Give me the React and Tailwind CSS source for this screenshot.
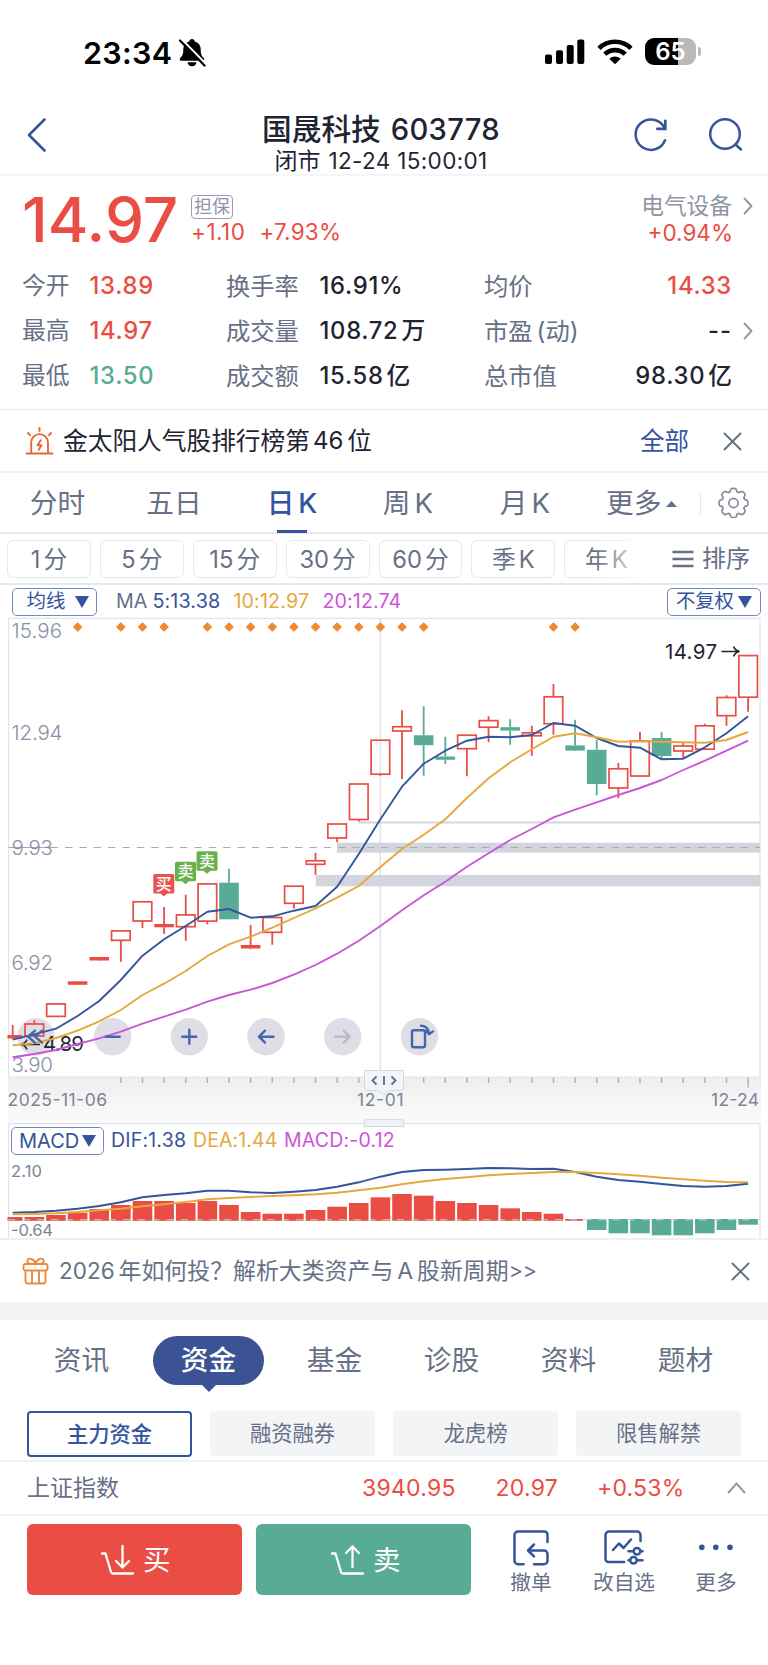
import React from "react";

const RED = "#ea4d44";
const GREEN = "#58ab94";
const BLUE = "#34549c";
const AMBER = "#e6a73c";
const VIOLET = "#cb55d8";

const cx = (i) => 12.7 + i * 21.63;

// [up, body top, body bottom, high, low]
const CANDLES = [
  [1, 1035, 1038.5, 1025, 1039.5],
  [1, 1024, 1036, 1020, 1036],
  [1, 1003.9, 1016.4, 1004, 1016],
  [1, 981.3, 984.8, 983, 983],
  [1, 957, 960.5, 958, 958],
  [1, 930.9, 940.3, 931, 961.7],
  [1, 901.8, 921, 902, 928],
  [1, 924, 927.3, 907, 934],
  [1, 914.9, 926.7, 894.7, 940.7],
  [1, 883.9, 921.1, 884, 924.6],
  [0, 882.7, 919.3, 868.7, 919],
  [1, 945, 948.5, 925, 949.3],
  [1, 917.5, 932.3, 918, 944.7],
  [1, 886.2, 903.3, 887, 908.5],
  [1, 860.8, 864.3, 852.7, 874.7],
  [1, 824, 838, 824, 842.3],
  [1, 784, 819.5, 784, 821.5],
  [1, 740.2, 774.2, 741, 775.8],
  [1, 726.7, 731, 710.3, 779],
  [0, 735.3, 745.2, 706.3, 775.7],
  [0, 756.5, 759.8, 736.7, 764],
  [1, 735.2, 748.7, 734.5, 776.3],
  [1, 720.6, 727.2, 716.3, 742.3],
  [0, 727.2, 730.6, 719.3, 744.7],
  [1, 732.8, 735.8, 725.7, 755.7],
  [1, 696.8, 723.8, 684, 734.7],
  [0, 745.4, 750.6, 719.7, 750],
  [0, 749.8, 784, 740, 795.3],
  [1, 768.8, 788, 763, 798.3],
  [1, 741, 776, 731.7, 777],
  [0, 738, 756, 731.7, 758.7],
  [1, 746, 751, 743, 759],
  [1, 725.8, 749.2, 723.7, 749],
  [1, 697.5, 715.7, 695.3, 726],
  [1, 655.6, 697.2, 656, 711.7],
];

const MA5 = [1039.7, 1034.3, 1028.7, 1016, 1001, 980, 955.7, 939.3, 926, 911.7, 909, 917.7, 916.3, 910.7, 906, 886.7, 854, 819.3, 786.7, 763.7, 750.7, 740.7, 736.7, 737.3, 735, 723, 725.7, 738, 746, 747.7, 759.3, 758.7, 747.3, 733.3, 716.3];
const MA10 = [1045.3, 1043.3, 1038, 1030.7, 1021.3, 1010, 995, 983.7, 971, 956, 944.3, 936.7, 927.7, 918, 908.3, 897.7, 886, 867, 849, 834.7, 819.3, 798, 778.3, 762.3, 749.3, 736.7, 733.3, 737.3, 741.7, 741.3, 741.7, 742.3, 742.7, 740, 732];
const MA20 = [1057.3, 1054, 1050, 1044, 1038.3, 1031.7, 1023.7, 1016.7, 1009.7, 1001.7, 995, 989.7, 983, 974.7, 965, 953.7, 940.7, 926, 910.3, 895.3, 881.7, 866.7, 853.3, 840, 829, 817.3, 809.7, 802.3, 795, 788, 780, 770, 760.7, 750.7, 740.7];

const HIST = [1217, 1217, 1215, 1212.7, 1209, 1205, 1201, 1201, 1203, 1201, 1205, 1212, 1213.7, 1213.7, 1210, 1206.7, 1203, 1197.3, 1194, 1195.7, 1201, 1203, 1205, 1208.3, 1212, 1213.7, 1219, 1230, 1233.3, 1233.3, 1235.3, 1235.3, 1233.3, 1230, 1224.7];
const DIF = [1212.7, 1212, 1210.7, 1208.7, 1206, 1202.3, 1197.3, 1195, 1193.3, 1190.7, 1190.7, 1192.3, 1193, 1191.7, 1190, 1186.7, 1182.3, 1176.7, 1172, 1170, 1169.7, 1169, 1168, 1168.3, 1169, 1168.7, 1172, 1176.7, 1180, 1181.7, 1184, 1186, 1186.7, 1186, 1183.7];
const DEA = [1214.3, 1214, 1213.3, 1212, 1210.3, 1208.7, 1206.3, 1204.3, 1202, 1199.3, 1198, 1197, 1196, 1195.3, 1194.3, 1192.7, 1190.3, 1187.7, 1184.3, 1181.3, 1179, 1177.3, 1175.3, 1174, 1173, 1172, 1172, 1173, 1174.3, 1175.7, 1177.7, 1179.3, 1180.7, 1182, 1182.3];

const MARKS = [3, 5, 6, 7, 9, 10, 11, 12, 13, 14, 15, 16, 17, 18, 19, 25, 26];

const line = (ys) => ys.map((y, i) => `${cx(i).toFixed(1)},${y}`).join(" ");

function StatusBar() {
  return (
    <div className="flex h-[104px] shrink-0 pl-[83px] pr-[67px]">
      <div className="mt-[37px] flex h-8 items-center text-[30.5px] font-semibold leading-none text-black">
        <span className="w-[95px] tracking-[0.3px]">23:34</span>
        <svg width="28" height="30" viewBox="0 0 28 30" fill="#000">
          <path d="M14 1c1.600 0 2.600 1 2.700 2.400 4 1 6 4.200 6 8 0 4.800.9 6.400 3 8.600 1 1 .6 2.700-.9 2.700H3.200c-1.500 0-1.900-1.700-.9-2.700 2.100-2.200 3-3.800 3-8.600 0-3.800 2-7 6-8C11.400 2 12.400 1 14 1z" />
          <path d="M9.500 24.300h9c-.3 2.500-2.200 4-4.500 4s-4.200-1.500-4.500-4z" />
          <path d="M4.200 1.700 29 27" stroke="#fff" strokeWidth="2" />
          <path d="M2 2.500 26.500 27.500" stroke="#000" strokeWidth="2.200" strokeLinecap="round" />
        </svg>
      </div>
      <div className="ml-auto mt-[38px] flex h-[27px] items-center">
        <svg className="mt-[1px]" width="40" height="26" viewBox="0 0 40 26" fill="#000">
          <rect x="0" y="15.500" width="7" height="9.500" rx="2" />
          <rect x="11" y="11.300" width="7" height="13.700" rx="2" />
          <rect x="21.700" y="6" width="7" height="19" rx="2" />
          <rect x="32.300" y="0.500" width="7" height="24.500" rx="2" />
        </svg>
        <svg className="ml-3 mt-[1px]" width="36" height="26" viewBox="0 0 36 26" fill="none" stroke="#000" strokeWidth="4.600">
          <path d="M2 9.300a23 23 0 0 1 32 0" />
          <path d="M7.800 15.200a14.800 14.800 0 0 1 20.400 0" />
          <path d="M12.300 19.700a8.200 8.200 0 0 1 11.400 0L18 25.300z" fill="#000" stroke="none" />
        </svg>
        <div className="ml-3 flex h-[27px] w-[51px] items-center justify-center rounded-[9px] bg-[linear-gradient(90deg,#000_65%,#b9b9b9_65%)] text-[24px] font-semibold leading-none text-white">
          65
        </div>
        <div className="ml-[2px] h-[9px] w-[3px] rounded-r-full bg-[#b9b9b9]" />
      </div>
    </div>
  );
}

function Header() {
  return (
    <div className="flex h-[72px] shrink-0 border-b-2 border-[#f5f6f7] pl-[27px] pr-[25px]">
      <svg className="mt-[13px]" width="20" height="36" viewBox="0 0 20 36" fill="none" stroke={BLUE} strokeWidth="2.600" strokeLinecap="round" strokeLinejoin="round">
        <path d="M17.500 2.500 2 18l15.500 15.500" />
      </svg>
      <div className="ml-[107px] flex w-[454px] flex-col items-center text-[#1f2433]">
        <div className="mt-[9px] flex h-[34px] items-center whitespace-nowrap text-[29.700px] font-medium leading-none">
          国晟科技<span className="ml-[10px] text-[29.200px] tracking-[0.3px]">603778</span>
        </div>
        <div className="mt-[1px] flex h-[26px] items-center whitespace-nowrap text-[23px] leading-none">
          闭市<span className="ml-[8px] text-[22.500px] tracking-[0.350px]">12-24 15:00:01</span>
        </div>
      </div>
      <svg className="ml-auto mt-[13px]" width="36" height="36" viewBox="0 0 36 36" fill="none" stroke={BLUE} strokeWidth="2.500" strokeLinecap="round">
        <path d="M32 23.200A15.200 15.200 0 1 1 31.500 11" />
        <path d="M32.300 3.800v8h-8" strokeWidth="2.700" />
      </svg>
      <svg className="ml-[38px] mt-[13px]" width="36" height="36" viewBox="0 0 36 36" fill="none" stroke={BLUE} strokeWidth="2.500" strokeLinecap="round">
        <circle cx="18" cy="17" r="14.800" />
        <path d="m28.500 27.500 5.500 5" />
      </svg>
    </div>
  );
}

function Chevron({ className, color = "#9198a8" }) {
  return (
    <svg className={className} width="10" height="18" viewBox="0 0 10 18" fill="none" stroke={color} strokeWidth="1.900" strokeLinecap="round" strokeLinejoin="round">
      <path d="m1.500 1.500 7 7.500-7 7.500" />
    </svg>
  );
}

function Close({ className }) {
  return (
    <svg className={className} width="19" height="19" viewBox="0 0 19 19" fill="none" stroke="#667085" strokeWidth="1.900" strokeLinecap="round">
      <path d="m1.500 1.500 16 16M17.500 1.500l-16 16" />
    </svg>
  );
}

const STATS = [
  ["今开", "13.89", "text-[#ea4d44]", "换手率", "16.91%", "", "均价", "14.33", "", "text-[#ea4d44]"],
  ["最高", "14.97", "text-[#ea4d44]", "成交量", "108.72", "万", "市盈", "--", "", "text-[#1f2433]"],
  ["最低", "13.50", "text-[#58ab94]", "成交额", "15.58", "亿", "总市值", "98.30", "亿", "text-[#1f2433]"],
];

function Quote() {
  return (
    <div className="h-[234px] shrink-0 border-b border-[#e6e8eb]">
      <div className="flex h-[88px]">
        <div className="ml-[22px] flex w-[169px] items-center text-[62px] font-medium leading-none tracking-[0.1px] text-[#ea4d44]">14.97</div>
        <div className="pt-[19px]">
          <div className="flex h-[24px] w-[42px] items-center justify-center rounded-[4px] border border-[#9a9db5] text-[18px] leading-none text-[#8f92ad]">担保</div>
          <div className="flex h-[26px] items-center gap-[14px] text-[22.5px] leading-none text-[#ea4d44]">
            <span className="tracking-[0.5px]">+1.10</span>
            <span className="tracking-[0.2px]">+7.93%</span>
          </div>
        </div>
        <div className="ml-auto flex pt-[17px]">
          <div className="flex flex-col items-end">
            <div className="flex h-[27px] items-center text-[22.700px] leading-none text-[#9095a6]">电气设备</div>
            <div className="-mr-[1px] flex h-[26px] items-center text-[22.500px] leading-none text-[#ea4d44]">+0.94%</div>
          </div>
          <Chevron className="ml-[11px] mr-[15px] mt-[4px]" />
        </div>
      </div>
      {STATS.map((r) => (
        <div key={r[0]} className="flex h-[44.7px] items-center text-[23.800px] leading-none text-[#677086]">
          <span className="ml-[22px] w-[67.500px]">{r[0]}</span>
          <span className={`w-[136.500px] font-medium tracking-[0.700px] ${r[2]}`}>{r[1]}</span>
          <span className="w-[93.500px] text-[24.300px]">{r[3]}</span>
          <span className="flex w-[164.500px] items-center font-medium text-[#1f2433]">
            <span className="tracking-[0.700px]">{r[4]}</span>
            {r[5] && <span className="ml-[3px]">{r[5]}</span>}
          </span>
          <span className="flex items-center text-[24.300px]">
            {r[6]}
            {r[6] === "市盈" && <span className="ml-[4px]">(动)</span>}
          </span>
          <span className={`ml-auto mr-[36px] flex items-center font-medium ${r[9]}`}>
            <span className={r[7] === "--" ? "tracking-[1px]" : "tracking-[0.700px]"}>{r[7]}</span>
            {r[8] && <span className="ml-[3px]">{r[8]}</span>}
          </span>
          {r[7] === "--" && <Chevron className="-ml-[25px] mr-[15px]" />}
        </div>
      ))}
    </div>
  );
}

function RankBanner() {
  return (
    <div className="flex h-[63px] shrink-0 items-center border-b-2 border-[#f0f2f4] pl-[25px] pr-[26px] pt-[1px] text-[24.700px] leading-none text-[#1f2433]">
      <svg width="29" height="28" viewBox="0 0 29 28" fill="none" stroke="#e8653a" strokeWidth="1.900" strokeLinecap="round" strokeLinejoin="round">
        <path d="M1.500 26.500h26M6.200 26V15.500a8.400 8.400 0 0 1 16.800 0V26" />
        <path d="M14.500 1v3M3 6l2 2.200M26 6l-2 2.200" />
        <path d="m15.800 13.200-3.300 5h4l-2.800 4.600" />
      </svg>
      <span className="ml-[9px]">金太阳人气股排行榜第</span>
      <span className="ml-[3px] mr-[4px] text-[24px]">46</span>
      <span>位</span>
      <span className="ml-auto text-[24.500px] text-[#34549c]">全部</span>
      <Close className="ml-[34px]" />
    </div>
  );
}

const PERIODS = [
  ["分时", "", "w-[115px]"],
  ["五日", "", "w-[118px]"],
  ["日", "K", "w-[118px]"],
  ["周", "K", "w-[114px]"],
  ["月", "K", "w-[120px]"],
];

function PeriodTabs() {
  return (
    <div className="flex h-[61px] shrink-0 border-b-2 border-[#e6e8ec] text-[27.700px] leading-none text-[#677086]">
      {PERIODS.map(([a, b, w]) => (
        <div key={a} className={`relative flex items-center justify-center pt-[2px] ${w} ${a === "日" ? "font-medium text-[#34549c]" : ""}`}>
          {a}
          {b && <span className="ml-[4px]">{b}</span>}
          {a === "日" && <span className="absolute -bottom-[1px] h-[3px] w-[30px] bg-[#34549c]" />}
        </div>
      ))}
      <div className="ml-[21px] flex w-[94px] items-center pt-[2px]">
        更多
        <svg className="ml-[5px]" width="11" height="8" viewBox="0 0 11 8" fill="#677086"><path d="M5.500 1 11 7H0z" /></svg>
      </div>
      <div className="mt-[20px] h-[22px] w-px bg-[#e3e6ea]" />
      <svg className="ml-[17px] mt-[14px]" width="31" height="31" viewBox="0 0 31 31" fill="none" stroke="#858c9c" strokeWidth="1.700" strokeLinejoin="round">
        <path d="M12.900 2.200c.5-1 4.700-1 5.200 0l1 2.700 1.700.7 2.600-1.200c1.100-.4 4.100 2.600 3.700 3.700l-1.200 2.600.7 1.700 2.700 1c1 .5 1 4.700 0 5.200l-2.700 1-.7 1.700 1.200 2.600c.4 1.100-2.600 4.100-3.700 3.700l-2.600-1.200-1.700.7-1 2.700c-.5 1-4.700 1-5.200 0l-1-2.700-1.700-.7-2.600 1.200c-1.100.4-4.100-2.600-3.700-3.700l1.200-2.600-.7-1.700-2.700-1c-1-.5-1-4.700 0-5.200l2.700-1 .7-1.700-1.200-2.600c-.4-1.100 2.600-4.100 3.700-3.700l2.600 1.200 1.700-.7z" />
        <circle cx="15.500" cy="16" r="4.600" />
      </svg>
    </div>
  );
}

const MINUTES = [["1", "分"], ["5", "分"], ["15", "分"], ["30", "分"], ["60", "分"], ["季", "K"], ["年", "K"]];

function MinuteTabs() {
  return (
    <div className="flex h-[51px] shrink-0 items-center border-b-2 border-[#e6e8ec] text-[23.700px] leading-none text-[#677086]">
      <div className="relative flex gap-[9px] pl-[7px]">
        {MINUTES.map(([a, b]) => (
          <div key={a} className="flex h-[38px] w-[83.900px] items-center justify-center gap-[3px] rounded-[6px] border-[1.500px] border-[#e4e7eb] pt-[2px]">
            <span>{a}</span>
            <span>{b}</span>
          </div>
        ))}
        <div className="absolute -right-[2px] top-0 h-[38px] w-[56px] bg-linear-to-r from-white/0 to-white" />
      </div>
      <div className="ml-auto mr-[18px] flex items-center pt-[1px]">
        <svg width="22" height="18" viewBox="0 0 22 18" stroke="#677086" strokeWidth="2.600"><path d="M0.500 2h21M0.500 9h21M0.500 16h21" /></svg>
        <span className="ml-[8px] text-[24px]">排序</span>
      </div>
    </div>
  );
}

function Triangle({ className }) {
  return (
    <svg className={className} width="14" height="12" viewBox="0 0 14 12" fill={BLUE}><path d="M0 0h14L7 12z" /></svg>
  );
}

function MaBar() {
  return (
    <div className="flex h-[32px] shrink-0 items-center pl-[12px] pr-[7px] pt-[1px] text-[19.700px] leading-none">
      <div className="flex h-[28px] w-[85px] items-center rounded-[5px] border-[1.500px] border-[#6f8bc4] pl-[13.500px] text-[19.500px] text-[#34549c]">
        均线
        <Triangle className="ml-[9px]" />
      </div>
      <span className="ml-[19px] text-[#677086]">MA</span>
      <span className="ml-[5px] w-[81px] tracking-[0.150px] text-[#34549c]">5:13.38</span>
      <span className="w-[89px] tracking-[0.150px] text-[#e6a73c]">10:12.97</span>
      <span className="tracking-[0.100px] text-[#cb55d8]">20:12.74</span>
      <div className="ml-auto flex h-[28px] w-[94px] items-center rounded-[5px] border-[1.500px] border-[#6f8bc4] pl-[8px] text-[19.300px] text-[#34549c]">
        不复权
        <Triangle className="ml-[4px]" />
      </div>
    </div>
  );
}

function Badge({ x, y, color, children }) {
  return (
    <g transform={`translate(${x} ${y})`}>
      <path d="M-9 0H9a1.500 1.500 0 0 1 1.500 1.500v16.500A1.500 1.500 0 0 1 9 19.500H3.500L0 22.500l-3.500-3H-9a1.500 1.500 0 0 1-1.500-1.500V1.500A1.500 1.500 0 0 1-9 0z" fill={color} />
      <text x="0" y="15.700" textAnchor="middle" fontSize="16" fontWeight="500" fill="#fff">{children}</text>
    </g>
  );
}

const DISCS = [36, 112.7, 189.3, 266, 342.7, 419.5];

function Glyph({ i, children, muted }) {
  return (
    <g transform={`translate(${DISCS[i]} 1036.700)`} fill="none" stroke={muted ? "#b9bccb" : "#4466ab"} strokeWidth="2.400" strokeLinecap="round" strokeLinejoin="round">
      {children}
    </g>
  );
}

function KLineChart() {
  return (
    <svg className="block shrink-0" width="768" height="506" viewBox="0 617 768 506">
      <defs>
        <linearGradient id="axis" x1="0" y1="0" x2="0" y2="1">
          <stop offset="0" stopColor="#eeeeef" />
          <stop offset="1" stopColor="#fbfbfb" />
        </linearGradient>
      </defs>
      <rect x="8" y="1077" width="753" height="46" fill="url(#axis)" />
      <path d="M8.500 1077V618.300H760V1077z" fill="none" stroke="#e3e4e8" strokeWidth="1.200" />
      <path d="M380.300 618v459" stroke="#dcdee4" strokeWidth="1.300" />
      <g fill="#d2d6dc">
        <rect x="358.500" y="821.500" width="402" height="2" />
        <rect x="337" y="842.700" width="423.500" height="10" />
        <rect x="315.700" y="875" width="444.800" height="11.300" />
      </g>
      <path d="M8.500 847.500H58" stroke="#a6abb6" strokeWidth="1.200" />
      <path d="M65 847.500H760" stroke="#a6abb6" strokeWidth="1.200" strokeDasharray="7.300 7.080" />
      {MARKS.map((i) => (
        <path key={i} d={`M${cx(i) - 3.8} 627l3.800-3.800 3.800 3.800-3.800 3.800z`} fill="#ee8a30" stroke="#ee8a30" strokeWidth="1.600" strokeLinejoin="round" />
      ))}
      <g fontSize="20.500" fontWeight="300" fill="#8b8fa6">
        <text x="11.500" y="638" textLength="50.500">15.96</text>
        <text x="11.500" y="740" textLength="51">12.94</text>
        <text x="11.500" y="855" textLength="41.500">9.93</text>
        <text x="11.500" y="969.500" textLength="41.500">6.92</text>
        <text x="11.500" y="1071.500" textLength="41.500">3.90</text>
      </g>
      {DISCS.map((x) => (
        <circle key={x} cx={x} cy="1036.700" r="18.700" fill="#dfdee6" />
      ))}
      {CANDLES.map(([up, top, bottom, high, low], i) => {
        const x = cx(i);
        const c = up ? RED : GREEN;
        const solid = !up || (bottom - top < 3.6 && i < 12);
        const left = i === 0 ? 7.5 : x - 9.8;
        const right = i === 0 ? x + 9.3 : x + 9.8;
        return (
          <g key={i} stroke={c} strokeWidth="1.700">
            <path d={`M${x} ${high}V${top}M${x} ${bottom}V${low}`} strokeWidth="1.800" />
            {solid ? (
              <rect x={left} y={top} width={right - left} height={bottom - top} fill={c} stroke="none" />
            ) : (
              <rect x={left + 0.5} y={top} width={right - left - 1} height={bottom - top} fill="none" />
            )}
          </g>
        );
      })}
      <Badge x={163.8} y={874} color="#e9544f">买</Badge>
      <Badge x={185.5} y={861.7} color="#68b14c">卖</Badge>
      <Badge x={207} y={851.3} color="#68b14c">卖</Badge>
      <g fill="none" stroke="#1f2433" strokeWidth="1.700">
        <path d="M721.500 651.500H739M733.500 646.700q2 4.200 6 4.800-4 .6-6 4.800" />
        <path d="M40 1044.500H22M27 1039.700q-2 4.200-6 4.800 4 .6 6 4.800" />
      </g>
      <g fontSize="20.500" fill="#1f2433">
        <text x="665" y="658.500" textLength="52">14.97</text>
        <text x="43" y="1051" textLength="41">4.89</text>
      </g>
      <g fill="none" strokeWidth="1.900" strokeLinejoin="round">
        <polyline points={line(MA5)} stroke={BLUE} />
        <polyline points={line(MA10)} stroke={AMBER} />
        <polyline points={line(MA20)} stroke={VIOLET} />
      </g>
      <Glyph i={0}><path d="m-1-6-7 6 7 6M6-6l-7 6 7 6" /></Glyph>
      <Glyph i={1}><path d="M-7 0H7" /></Glyph>
      <Glyph i={2}><path d="M-7 0H7M0-7V7" /></Glyph>
      <Glyph i={3}><path d="M7.500 0H-7M-1-6l-6 6 6 6" /></Glyph>
      <Glyph i={4} muted><path d="M-7.500 0H7M1-6l6 6-6 6" /></Glyph>
      <Glyph i={5}>
        <rect x="-7.500" y="-6.500" width="13" height="17" rx="2" />
        <path d="M1.500-11c4.500 0 7.800 3 8 8M6.300-6l3.300 3.500 3.900-2.800" />
      </Glyph>
      <g stroke="#a9aeb9" strokeWidth="1.400">
        {CANDLES.map((_, i) => (i < 5 ? null : <path key={i} d={`M${cx(i)} 1077.500v${i === 34 ? 10 : 5.5}`} />))}
      </g>
      <g fontSize="17.500" fill="#7c8496">
        <text x="7.500" y="1106" textLength="99.500">2025-11-06</text>
        <text x="357" y="1106" textLength="46.500">12-01</text>
        <text x="711" y="1106" textLength="48">12-24</text>
      </g>
      <path d="M364.500 1070.500h39v17.500a2.500 2.500 0 0 1-2.500 2.500h-11.500l-5.500 4-5.500-4H367a2.500 2.500 0 0 1-2.500-2.500z" fill="#f1f5fa" stroke="#d4d9e1" strokeWidth="1" />
      <path d="m376.500 1076.500-4 4 4 4M391.500 1076.500l4 4-4 4M384 1076v9" fill="none" stroke="#677086" strokeWidth="1.900" />
    </svg>
  );
}

function Macd() {
  return (
    <div className="relative h-[117px] shrink-0 border-b-2 border-[#eef0f3]">
      <svg className="block overflow-visible" width="768" height="115" viewBox="0 1123 768 115">
        <path d="M8.500 1238V1123.600H760V1238" fill="none" stroke="#dfe2e7" strokeWidth="1.200" />
        <path d="M364 1126.500v-4a3 3 0 0 1 3-3h34a3 3 0 0 1 3 3v4z" fill="#edf2f8" stroke="#d4d9e1" strokeWidth="1" />
        {HIST.map((y, i) => {
          const green = i >= 27;
          const left = i === 0 ? 7.5 : cx(i) - 9.8;
          return (
            <rect key={i} x={left} y={green ? 1219 : y} width={cx(i) + (i === 26 ? 7.8 : 9.8) - left} height={green ? y - 1219 : 1220.8 - y} fill={green ? GREEN : RED} />
          );
        })}
        <path d="M8 1219.700H760" stroke="#c9cdd4" strokeWidth="1.100" strokeDasharray="7.300 7.100" />
        <g fill="none" strokeWidth="1.900" strokeLinejoin="round">
          <polyline points={line(DIF)} stroke={BLUE} />
          <polyline points={line(DEA)} stroke={AMBER} />
        </g>
        <g fontSize="16.500" fill="#7c8496">
          <text x="11" y="1177" textLength="31">2.10</text>
          <text x="11" y="1236" textLength="42">-0.64</text>
        </g>
      </svg>
      <div className="absolute left-[11px] top-[3px] flex h-[29px] items-center text-[19.500px] leading-none">
        <div className="flex h-[28px] w-[93px] items-center rounded-[5px] border-[1.500px] border-[#6f8bc4] pl-[7px] text-[#34549c]">
          <span className="w-[63px] text-[20px]">MACD</span>
          <Triangle />
        </div>
        <span className="ml-[7px] w-[82px] tracking-[0.200px] text-[#34549c]">DIF:1.38</span>
        <span className="w-[91px] tracking-[0.100px] text-[#e6a73c]">DEA:1.44</span>
        <span className="tracking-[0.200px] text-[#cb55d8]">MACD:-0.12</span>
      </div>
    </div>
  );
}

function GiftBanner() {
  return (
    <div className="flex h-[62px] shrink-0 items-center pl-[22px] pr-[18px] text-[22.900px] leading-none text-[#677086]">
      <svg width="27" height="28" viewBox="0 0 27 28" fill="none" stroke="#ea8a3c" strokeWidth="1.900" strokeLinejoin="round">
        <rect x="1.500" y="7" width="24" height="6.500" rx="2" />
        <path d="M3.500 13.500V24a2.500 2.500 0 0 0 2.500 2.500h15a2.500 2.500 0 0 0 2.500-2.500V13.500M10 14v12M17 14v12" />
        <path d="M13.500 6.800C12 1.500 6 0 5.300 3.500 4.900 5.700 7 6.800 9 6.900M13.500 6.800C15 1.500 21 0 21.700 3.500c.4 2.200-1.700 3.300-3.700 3.400" />
      </svg>
      <span className="ml-[10px] text-[22.500px]">2026</span>
      <span className="ml-[4px]">年如何投？解析大类资产与</span>
      <span className="mx-[4px]">A</span>
      <span>股新周期</span>
      <span className="text-[21.500px]">&gt;&gt;</span>
      <Close className="ml-auto" />
    </div>
  );
}

const SECTIONS = ["资讯", "资金", "基金", "诊股", "资料", "题材"];
const FUNDS = ["主力资金", "融资融券", "龙虎榜", "限售解禁"];

function FundPanel() {
  return (
    <div className="flex h-[142px] shrink-0 flex-col border-b-2 border-[#f0f2f4]">
      <div className="ml-[23px] mt-[16px] flex h-[49px] text-[27.700px] leading-none text-[#677086]">
        {SECTIONS.map((s) =>
          s === "资金" ? (
            <div key={s} className="relative ml-[13px] mr-[12px] flex w-[111px] shrink-0 items-center justify-center rounded-full bg-[#3b5394] font-medium text-white">
              {s}
              <svg className="absolute -bottom-[7px]" width="16" height="8" viewBox="0 0 16 8" fill="#3b5394"><path d="M0 0h16L8 8z" /></svg>
            </div>
          ) : (
            <div key={s} className="flex w-[117px] shrink-0 items-center justify-center">{s}</div>
          )
        )}
      </div>
      <div className="mt-[26px] flex gap-[18px] pl-[27px] text-[21.300px] leading-none text-[#677086]">
        {FUNDS.map((f, i) => (
          <div
            key={f}
            className={
              i === 0
                ? "flex h-[46px] w-[165px] items-center justify-center rounded-[4px] border-2 border-[#34549c] pt-[2px] font-medium text-[#34549c]"
                : "flex h-[45px] w-[165px] items-center justify-center rounded-[3px] bg-[#f3f4f6]"
            }
          >
            {f}
          </div>
        ))}
      </div>
    </div>
  );
}

function IndexRow() {
  return (
    <div className="flex h-[54px] shrink-0 items-center border-b-2 border-[#f0f2f4] pl-[27px] pr-[22px] text-[23px] leading-none text-[#ea4d44]">
      <span className="w-[335px] text-[#677086]">上证指数</span>
      <span className="w-[133.500px] tracking-[0.250px]">3940.95</span>
      <span className="w-[101.500px] tracking-[0.250px]">20.97</span>
      <span className="tracking-[0.200px]">+0.53%</span>
      <svg className="ml-auto" width="19" height="12" viewBox="0 0 19 12" fill="none" stroke="#9198a8" strokeWidth="1.900" strokeLinecap="round"><path d="m1.500 10.500 8-9 8 9" /></svg>
    </div>
  );
}

function TradeBar() {
  return (
    <div className="flex shrink-0 pl-[27px] pt-[8px]">
      <div className="flex h-[71px] w-[215px] items-center rounded-[6px] bg-[#ea4d44] pl-[73px] text-[27.500px] leading-none text-white">
        <svg width="36" height="32" viewBox="0 0 36 32" fill="none" stroke="#fff" strokeWidth="2.300" strokeLinecap="round" strokeLinejoin="round">
          <path d="M2 9.500h3.500l5.500 18.500q.5 1.500 2 1.500h20M22.500 2v21M16 17l6.500 6.500L29 17" />
        </svg>
        <span className="ml-[7px] pt-[2px]">买</span>
      </div>
      <div className="ml-[14px] flex h-[71px] w-[215px] items-center rounded-[6px] bg-[#58ab94] pl-[74px] text-[27.500px] leading-none text-white">
        <svg width="36" height="32" viewBox="0 0 36 32" fill="none" stroke="#fff" strokeWidth="2.300" strokeLinecap="round" strokeLinejoin="round">
          <path d="M2 9.500h3.500l5.500 18.500q.5 1.500 2 1.500h20M22.500 23V2.500M16 9l6.500-6.500L29 9" />
        </svg>
        <span className="ml-[7px] pt-[2px]">卖</span>
      </div>
      <div className="ml-[19px] flex text-[20.700px] leading-none text-[#677086]">
        <div className="flex w-[82px] flex-col items-center gap-[7px] pt-[6px]">
          <svg width="36" height="36" viewBox="0 0 36 36" fill="none" stroke={BLUE} strokeWidth="2.500" strokeLinecap="round" strokeLinejoin="round">
            <path d="M10.500 34.200H5a3.500 3.500 0 0 1-3.500-3.500V5A3.500 3.500 0 0 1 5 1.500h26.500a3 3 0 0 1 3 3v7.500" />
            <path d="M21 14.500 15 20.500l6 5.800M15.500 20.500h15.500a3.500 3.500 0 0 1 3.500 3.500v6.700a3.500 3.500 0 0 1-3.500 3.500H21" />
          </svg>
          撤单
        </div>
        <div className="flex w-[104px] flex-col items-center gap-[7px] pt-[6px]">
          <svg width="40" height="36" viewBox="0 0 40 36" fill="none" stroke={BLUE} strokeWidth="2.500" strokeLinecap="round" strokeLinejoin="round">
            <path d="M20 32H4.500a3 3 0 0 1-3-3V5a3.500 3.500 0 0 1 3.500-3.500h28A3.500 3.500 0 0 1 36.500 5v6" />
            <path d="m9 20 6-6.500 4.500 4.500L27 9.500" />
            <path d="M24.500 21.200h4M37 21.200h1.500M24.500 30.200h1M33.500 30.200h5" />
            <circle cx="33" cy="21.200" r="3.300" />
            <circle cx="29.500" cy="30.200" r="3.300" />
          </svg>
          改自选
        </div>
        <div className="flex w-[80px] flex-col items-center gap-[7px] pt-[6px]">
          <svg width="36" height="36" viewBox="0 0 36 36" fill={BLUE}>
            <circle cx="3.800" cy="17.200" r="2.800" />
            <circle cx="17.800" cy="17.200" r="2.800" />
            <circle cx="32" cy="17.200" r="2.800" />
          </svg>
          更多
        </div>
      </div>
    </div>
  );
}

export default function App() {
  return (
    <div className="flex h-[1665px] w-[768px] flex-col overflow-hidden whitespace-nowrap bg-white font-['Inter','Noto_Sans_CJK_SC',sans-serif]">
      <StatusBar />
      <Header />
      <Quote />
      <RankBanner />
      <PeriodTabs />
      <MinuteTabs />
      <MaBar />
      <KLineChart />
      <Macd />
      <GiftBanner />
      <div className="h-[18px] shrink-0 bg-[#f3f4f6]" />
      <FundPanel />
      <IndexRow />
      <TradeBar />
    </div>
  );
}
